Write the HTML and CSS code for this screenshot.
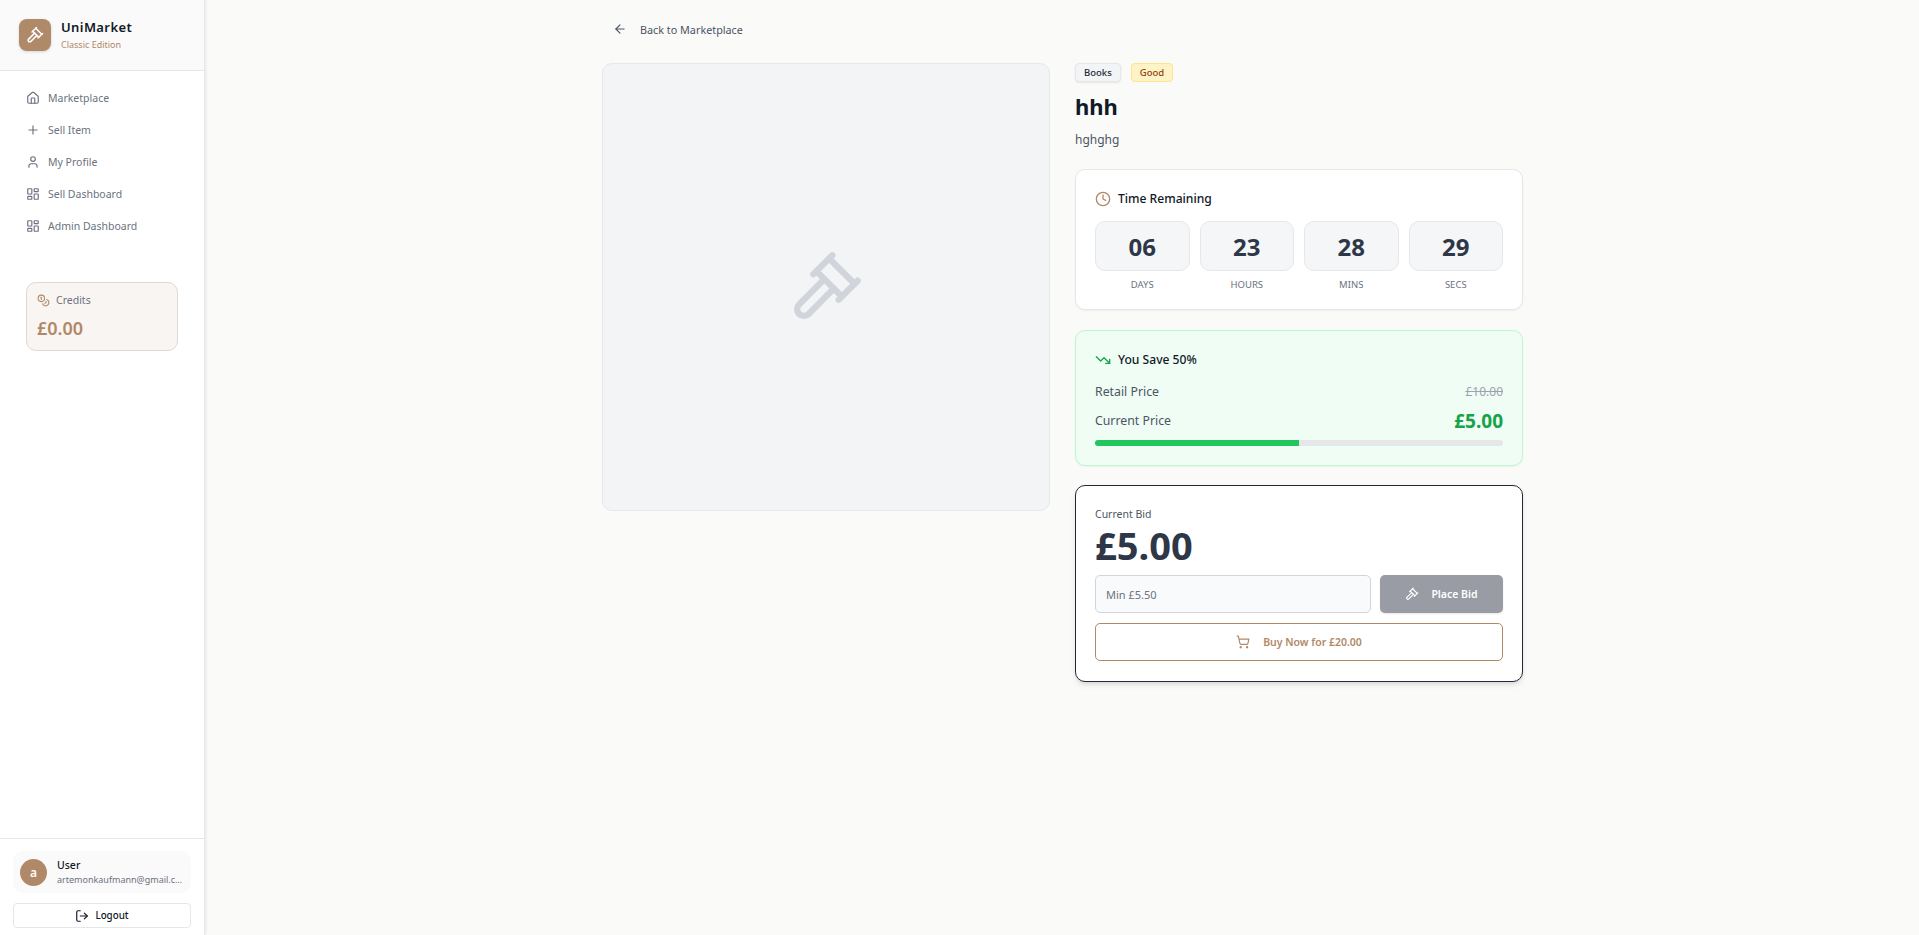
FILE: index.html
```html
<!DOCTYPE html>
<html lang="en">
<head>
<meta charset="utf-8">
<title>UniMarket</title>
<link rel="stylesheet" href="styles.css">
</head>
<body>
<div class="app">
  <aside class="sidebar">
    <div class="brand">
      <div class="logo">
        <svg viewBox="0 0 24 24" class="i18"><path d="m14.5 12.5-8 8a2.119 2.119 0 1 1-3-3l8-8"/><path d="m16 16 6-6"/><path d="m8 8 6-6"/><path d="m9 7 8 8"/><path d="m21 11-8-8"/></svg>
      </div>
      <div>
        <div class="brand-name">UniMarket</div>
        <div class="brand-sub">Classic Edition</div>
      </div>
    </div>
    <nav class="nav">
      <a class="nav-item"><svg viewBox="0 0 24 24" class="i14"><path d="M15 21v-8a1 1 0 0 0-1-1h-4a1 1 0 0 0-1 1v8"/><path d="M3 10a2 2 0 0 1 .709-1.528l7-5.999a2 2 0 0 1 2.582 0l7 5.999A2 2 0 0 1 21 10v9a2 2 0 0 1-2 2H5a2 2 0 0 1-2-2z"/></svg>Marketplace</a>
      <a class="nav-item"><svg viewBox="0 0 24 24" class="i14"><path d="M5 12h14"/><path d="M12 5v14"/></svg>Sell Item</a>
      <a class="nav-item"><svg viewBox="0 0 24 24" class="i14"><path d="M19 21v-2a4 4 0 0 0-4-4H9a4 4 0 0 0-4 4v2"/><circle cx="12" cy="7" r="4"/></svg>My Profile</a>
      <a class="nav-item"><svg viewBox="0 0 24 24" class="i14"><rect width="7" height="9" x="3" y="3" rx="1"/><rect width="7" height="5" x="14" y="3" rx="1"/><rect width="7" height="9" x="14" y="12" rx="1"/><rect width="7" height="5" x="3" y="16" rx="1"/></svg>Sell Dashboard</a>
      <a class="nav-item"><svg viewBox="0 0 24 24" class="i14"><rect width="7" height="9" x="3" y="3" rx="1"/><rect width="7" height="5" x="14" y="3" rx="1"/><rect width="7" height="9" x="14" y="12" rx="1"/><rect width="7" height="5" x="3" y="16" rx="1"/></svg>Admin Dashboard</a>
    </nav>
    <div class="credits">
      <div class="credits-label"><svg viewBox="0 0 24 24" class="i12 tan"><circle cx="8" cy="8" r="6"/><path d="M18.09 10.37A6 6 0 1 1 10.34 18"/><path d="M7 6h1v4"/><path d="m16.71 13.88.7.71-2.82 2.82"/></svg>Credits</div>
      <div class="credits-value">£0.00</div>
    </div>
    <div class="side-foot">
      <div class="user">
        <div class="avatar">a</div>
        <div class="user-text">
          <div class="user-name">User</div>
          <div class="user-mail">artemonkaufmann@gmail.com</div>
        </div>
      </div>
      <button class="logout"><svg viewBox="0 0 24 24" class="i14"><path d="M9 21H5a2 2 0 0 1-2-2V5a2 2 0 0 1 2-2h4"/><polyline points="16 17 21 12 16 7"/><line x1="21" x2="9" y1="12" y2="12"/></svg>Logout</button>
    </div>
  </aside>
  <main class="main">
    <div class="container">
      <a class="back"><svg viewBox="0 0 24 24" class="i14"><path d="m12 19-7-7 7-7"/><path d="M19 12H5"/></svg>Back to Marketplace</a>
      <div class="columns">
        <div class="photo">
          <svg viewBox="0 0 24 24" class="i80"><path d="m14.5 12.5-8 8a2.119 2.119 0 1 1-3-3l8-8"/><path d="m16 16 6-6"/><path d="m8 8 6-6"/><path d="m9 7 8 8"/><path d="m21 11-8-8"/></svg>
        </div>
        <div class="details">
          <div class="tags">
            <span class="tag tag-gray">Books</span>
            <span class="tag tag-yellow">Good</span>
          </div>
          <h1 class="title">hhh</h1>
          <p class="desc">hghghg</p>
          <section class="card timer">
            <div class="card-head"><svg viewBox="0 0 24 24" class="i16 tan"><circle cx="12" cy="12" r="10"/><polyline points="12 6 12 12 16 14"/></svg>Time Remaining</div>
            <div class="count">
              <div class="unit"><div class="num">06</div><div class="lbl">DAYS</div></div>
              <div class="unit"><div class="num">23</div><div class="lbl">HOURS</div></div>
              <div class="unit"><div class="num">28</div><div class="lbl">MINS</div></div>
              <div class="unit"><div class="num">29</div><div class="lbl">SECS</div></div>
            </div>
          </section>
          <section class="card save">
            <div class="card-head"><svg viewBox="0 0 24 24" class="i16 green"><polyline points="22 17 13.5 8.5 8.5 13.5 2 7"/><polyline points="16 17 22 17 22 11"/></svg>You Save 50%</div>
            <div class="row"><span>Retail Price</span><s class="retail">£10.00</s></div>
            <div class="row row-now"><span>Current Price</span><b class="now">£5.00</b></div>
            <div class="bar"><div class="bar-fill"></div></div>
          </section>
          <section class="card bid">
            <div class="bid-label">Current Bid</div>
            <div class="bid-value">£5.00</div>
            <div class="bid-row">
              <input class="bid-input" placeholder="Min £5.50">
              <button class="bid-btn"><svg viewBox="0 0 24 24" class="i14"><path d="m14.5 12.5-8 8a2.119 2.119 0 1 1-3-3l8-8"/><path d="m16 16 6-6"/><path d="m8 8 6-6"/><path d="m9 7 8 8"/><path d="m21 11-8-8"/></svg>Place Bid</button>
            </div>
            <button class="buy"><svg viewBox="0 0 24 24" class="i14"><circle cx="8" cy="21" r="1"/><circle cx="19" cy="21" r="1"/><path d="M2.05 2.05h2l2.66 12.42a2 2 0 0 0 2 1.58h9.78a2 2 0 0 0 1.95-1.57l1.65-7.43H5.12"/></svg>Buy Now for £20.00</button>
          </section>
        </div>
      </div>
    </div>
  </main>
</div>
</body>
</html>
```

FILE: styles.css
```css
* { box-sizing: border-box; }
html, body { margin: 0; height: 100%; }
body {
  font-family: "Noto Sans", "Open Sans", sans-serif;
  background: #fafaf9;
  color: #111827;
  overflow: hidden;
}
svg { fill: none; stroke: currentColor; stroke-width: 2; stroke-linecap: round; stroke-linejoin: round; flex: none; display: block; }
.i12 { width: 13px; height: 13px; }
.i14 { width: 14px; height: 14px; }
.i16 { width: 16px; height: 16px; }
.i18 { width: 18px; height: 18px; }
.i80 { width: 76px; height: 76px; }
.tan { color: #b08968; }
.green { color: #16a34a; }

.app { display: flex; height: 935px; }
.sidebar {
  width: 205px;
  flex: none;
  display: flex;
  flex-direction: column;
  background: #fff;
  border-right: 1px solid #e5e7eb;
  box-shadow: 1px 0 3px rgba(0, 0, 0, .08);
}
.brand {
  height: 71px;
  display: flex;
  align-items: center;
  gap: 10px;
  padding: 0 19px;
  background: #fafafa;
  border-bottom: 1px solid #e5e7eb;
}
.logo {
  width: 32px;
  height: 32px;
  border-radius: 8px;
  background: #b08968;
  color: #fff;
  display: flex;
  align-items: center;
  justify-content: center;
  box-shadow: 0 1px 3px rgba(0, 0, 0, .15);
}
.brand-name { font-size: 13px; font-weight: 600; line-height: 19px; letter-spacing: .4px; color: #111827; }
.brand-sub { font-size: 9px; line-height: 14px; margin-top: 1px; color: #b08968; }
.nav { padding: 11px 19px 0 26px; display: flex; flex-direction: column; }
.nav-item {
  height: 32px;
  display: flex;
  align-items: center;
  gap: 8px;
  font-size: 10.5px;
  color: #6b7280;
}
.credits {
  margin: 40px 0 0 26px;
  width: 152px;
  height: 69px;
  padding: 9px 10px;
  border: 1px solid #e0d8d2;
  border-radius: 10px;
  background: #f9f5f2;
}
.credits-label { display: flex; align-items: center; gap: 6px; font-size: 10.5px; line-height: 16px; color: #6b7280; }
.credits-value { margin-top: 8px; font-size: 18px; font-weight: 600; line-height: 24px; color: #b08968; }
.side-foot {
  margin-top: auto;
  height: 97px;
  padding: 12px 13px 0;
  border-top: 1px solid #e5e7eb;
}
.user {
  height: 42px;
  display: flex;
  align-items: center;
  gap: 10px;
  padding: 0 7px;
  border-radius: 10px;
  background: #fafafa;
}
.avatar {
  width: 27px;
  height: 27px;
  flex: none;
  border-radius: 50%;
  background: #b08968;
  color: #fff;
  font-size: 12px;
  font-weight: 600;
  display: flex;
  align-items: center;
  justify-content: center;
}
.user-text { min-width: 0; flex: 1; }
.user-name { font-size: 10.5px; line-height: 15px; font-weight: 500; color: #111827; }
.user-mail { font-size: 9px; line-height: 14px; color: #6b7280; white-space: nowrap; overflow: hidden; text-overflow: ellipsis; }
.logout {
  margin-top: 10px;
  width: 100%;
  height: 25px;
  display: flex;
  align-items: center;
  justify-content: center;
  gap: 6px;
  background: #fff;
  border: 1px solid #e5e7eb;
  border-radius: 4px;
  font: 500 9.8px "Noto Sans", sans-serif;
  color: #111827;
}

.main { flex: 1; min-width: 0; padding-left: 1px; }
.container { width: 921px; margin: 0 auto; padding-top: 21px; }
.back {
  height: 16px;
  display: flex;
  align-items: center;
  gap: 13px;
  padding-left: 11px;
  font-size: 10.8px;
  color: #4b5563;
}
.columns { margin-top: 26px; display: grid; grid-template-columns: 448px 448px; gap: 25px; align-items: start; }
.photo {
  height: 448px;
  border: 1px solid #e5e7eb;
  border-radius: 10px;
  background: #f3f4f6;
  color: #d1d5db;
  display: flex;
  align-items: center;
  justify-content: center;
}
.details { min-width: 0; }
.tags { display: flex; gap: 10px; }
.tag {
  height: 19px;
  padding: 0 8px;
  font-size: 9.5px;
  line-height: 17px;
  font-weight: 500;
  border-radius: 4px;
  border: 1px solid;
}
.tag-gray { background: #f3f4f6; border-color: #e5e7eb; color: #1f2937; box-shadow: 0 1px 2px rgba(0, 0, 0, .08); }
.tag-yellow { background: #fef3c7; border-color: #fde68a; color: #92400e; }
.title { margin: 8px 0 0; font-size: 22px; line-height: 32px; font-weight: 700; color: #111827; }
.desc { margin: 9px 0 0; font-size: 12px; line-height: 18px; color: #4b5563; }
.card {
  border: 1px solid #e5e7eb;
  border-radius: 10px;
  background: #fff;
  padding: 20px 19px;
  box-shadow: 0 1px 2px rgba(0, 0, 0, .05);
}
.card-head { display: flex; align-items: center; gap: 7px; font-size: 12.1px; line-height: 18px; font-weight: 500; color: #111827; }
.timer { margin-top: 20px; height: 141px; }
.count { margin-top: 13px; display: grid; grid-template-columns: repeat(4, 1fr); gap: 10px; }
.num {
  height: 50px;
  border: 1px solid #e5e7eb;
  border-radius: 10px;
  background: #f5f6f8;
  display: flex;
  align-items: center;
  justify-content: center;
  font-size: 24px;
  font-weight: 700;
  color: #2d3748;
}
.lbl { margin-top: 7px; text-align: center; font-size: 9.5px; line-height: 14px; color: #6b7280; }
.save { margin-top: 20px; height: 136px; background: #f0fdf4; border-color: #bbf7d0; }
.row { display: flex; justify-content: space-between; align-items: center; margin-top: 14px; font-size: 12.3px; line-height: 18px; color: #4b5563; }
.retail { color: #9ca3af; font-size: 12px; }
.row-now { margin-top: 10px; height: 20px; }
.now { font-size: 19px; font-weight: 700; color: #16a34a; }
.bar { margin-top: 9px; height: 6px; border-radius: 3px; background: #e5e7eb; overflow: hidden; }
.bar-fill { width: 50%; height: 100%; background: #22c55e; }
.bid {
  margin-top: 19px;
  height: 197px;
  border-color: #1f2937;
  box-shadow: 0 4px 6px -1px rgba(0, 0, 0, .1), 0 2px 4px -2px rgba(0, 0, 0, .1);
}
.bid-label { font-size: 10.5px; line-height: 16px; color: #4b5563; }
.bid-value { font-size: 38px; line-height: 46px; font-weight: 700; color: #2d3748; }
.bid-row { margin-top: 7px; display: flex; gap: 9px; }
.bid-input {
  flex: 1;
  min-width: 0;
  height: 38px;
  padding: 0 10px;
  border: 1px solid #d1d5db;
  border-radius: 5px;
  background: #f9fafb;
  font: 11px "Noto Sans", sans-serif;
}
.bid-input::placeholder { color: #6b7280; opacity: 1; }
.bid-btn {
  width: 123px;
  height: 38px;
  border: 0;
  border-radius: 5px;
  background: #999ca4;
  color: #fff;
  display: flex;
  align-items: center;
  justify-content: center;
  gap: 12px;
  font: 600 10.5px "Noto Sans", sans-serif;
  box-shadow: 0 1px 2px rgba(0, 0, 0, .1);
}
.buy {
  margin-top: 10px;
  width: 100%;
  height: 38px;
  border: 1px solid #b08968;
  border-radius: 5px;
  background: #fff;
  color: #b08968;
  display: flex;
  align-items: center;
  justify-content: center;
  gap: 13px;
  font: 600 10.5px "Noto Sans", sans-serif;
}
```
